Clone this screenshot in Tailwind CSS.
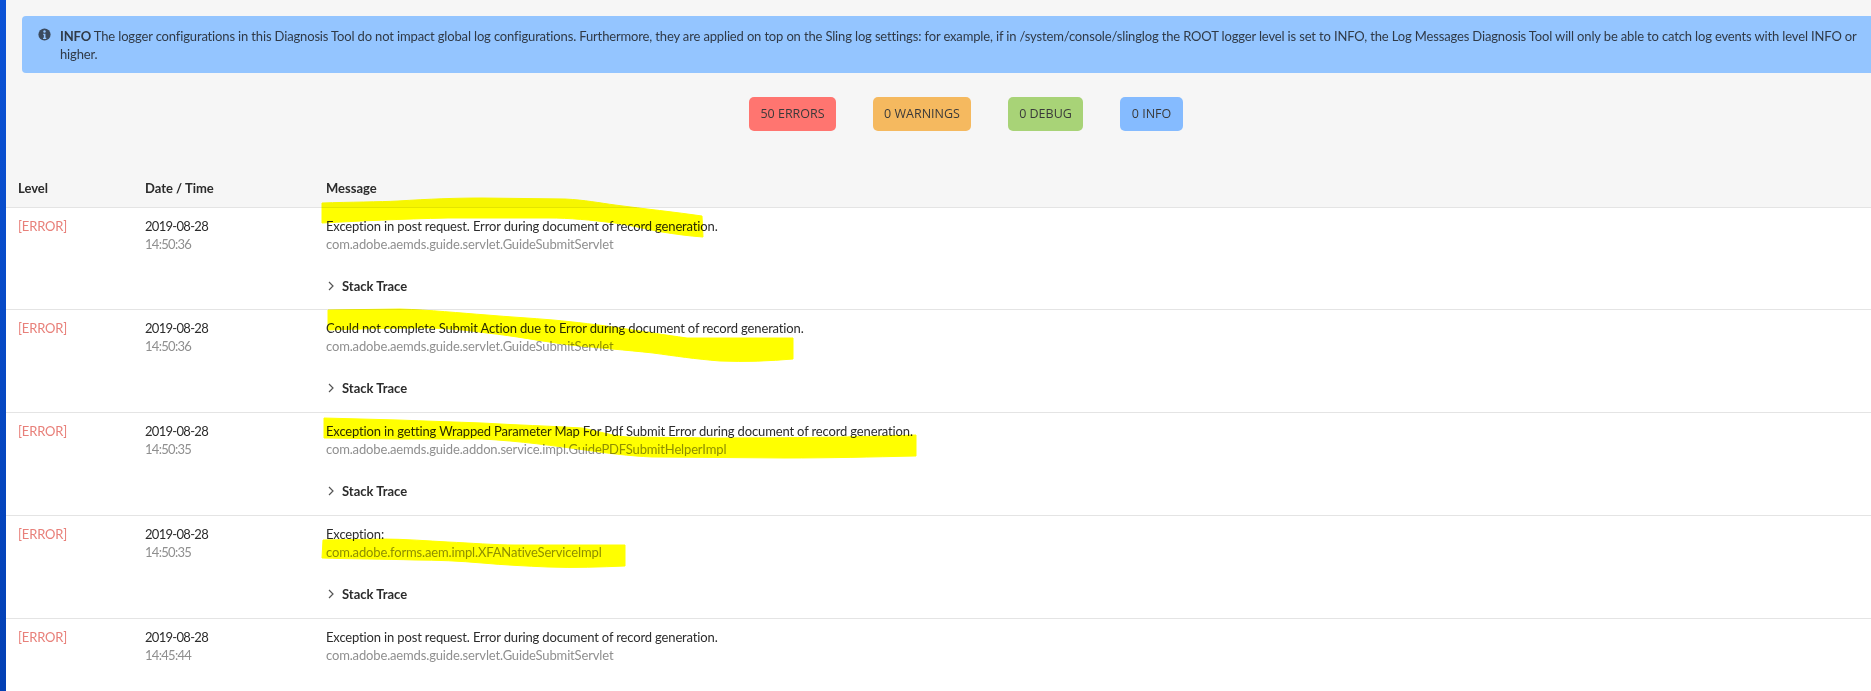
<!DOCTYPE html>
<html lang="en">
<head>
<meta charset="utf-8">
<title>Log Messages</title>
<script src="https://cdn.jsdelivr.net/npm/@tailwindcss/browser@4"></script>
</head>
<body class="m-0 bg-[#f6f6f6]">
<div class="relative flex h-[691px] w-[1871px] overflow-hidden bg-[#f6f6f6] font-['Lato',sans-serif] text-[#2c2c2c]">
  <div class="w-[6px] shrink-0 bg-gradient-to-b from-[#0b52d6] to-[#0340b4]"></div>
  <main class="min-w-0 flex-1">
    <div class="mt-4 ml-4 -mr-4 flex h-[57px] rounded-l bg-[#94c5ff] pt-[11px] pl-[16px] pr-[21px] text-[13px] leading-[18px] tracking-[-0.15px] text-[#303a47]">
      <svg class="mt-[1px] mr-[9px] h-[13px] w-[13px] shrink-0" viewBox="0 0 16 16"><circle cx="8" cy="8" r="7.5" fill="#3b4a5e"/><circle cx="8" cy="4.4" r="1.5" fill="#94c5ff"/><path d="M6.2 7h3v5h1v1.4H6.2V12h1V8.4h-1z" fill="#94c5ff"/></svg>
      <p><b class="font-bold">INFO</b> The logger configurations in this Diagnosis Tool do not impact global log configurations. Furthermore, they are applied on top on the Sling log settings: for example, if in /system/console/slinglog the ROOT logger level is set to INFO, the Log Messages Diagnosis Tool will only be able to catch log events with level INFO or higher.</p>
    </div>

    <div class="mt-6 ml-[743px] flex gap-[37px] font-['Open_Sans',sans-serif] text-[12.5px] text-[#3a3a3a]">
      <span class="flex h-[34px] w-[87px] items-center justify-center rounded-[5px] bg-[#ff7570]">50 ERRORS</span>
      <span class="flex h-[34px] w-[98px] items-center justify-center rounded-[5px] bg-[#f5b95f]">0 WARNINGS</span>
      <span class="flex h-[34px] w-[75px] items-center justify-center rounded-[5px] bg-[#a8d377]">0 DEBUG</span>
      <span class="flex h-[34px] w-[63px] items-center justify-center rounded-[5px] bg-[#85bbff]">0 INFO</span>
    </div>

    <div class="mt-[48px] grid h-[28px] grid-cols-[127px_181px_1fr] px-3 text-[13px] leading-[18px] font-bold text-[#2c2c2c]">
      <span>Level</span><span>Date / Time</span><span>Message</span>
    </div>

    <section class="border-t border-[#e4e4e4] bg-white text-[13px] leading-[18px] tracking-[-0.15px]">
      <article class="grid h-[102px] grid-cols-[127px_181px_1fr] border-b border-[#e4e4e4] px-3 pt-[9px]">
        <div class="text-[#e8807a]">[ERROR]</div>
        <div class="tracking-[-0.7px]"><div>2019-08-28</div><div class="text-[#8f8f8f]">14:50:36</div></div>
        <div><div>Exception in post request. Error during document of record generation.</div><div class="text-[#8f8f8f]">com.adobe.aemds.guide.servlet.GuideSubmitServlet</div>
          <div class="mt-[24px] flex items-center font-bold tracking-normal"><svg class="mr-[7px] ml-[1px] h-[10px] w-[8px]" viewBox="0 0 8 10" fill="none" stroke="#555" stroke-width="1.2"><path d="M2 1l4 4-4 4"/></svg>Stack Trace</div></div>
      </article>
      <article class="grid h-[103px] grid-cols-[127px_181px_1fr] border-b border-[#e4e4e4] px-3 pt-[9px]">
        <div class="text-[#e8807a]">[ERROR]</div>
        <div class="tracking-[-0.7px]"><div>2019-08-28</div><div class="text-[#8f8f8f]">14:50:36</div></div>
        <div><div>Could not complete Submit Action due to Error during document of record generation.</div><div class="text-[#8f8f8f]">com.adobe.aemds.guide.servlet.GuideSubmitServlet</div>
          <div class="mt-[24px] flex items-center font-bold tracking-normal"><svg class="mr-[7px] ml-[1px] h-[10px] w-[8px]" viewBox="0 0 8 10" fill="none" stroke="#555" stroke-width="1.2"><path d="M2 1l4 4-4 4"/></svg>Stack Trace</div></div>
      </article>
      <article class="grid h-[103px] grid-cols-[127px_181px_1fr] border-b border-[#e4e4e4] px-3 pt-[9px]">
        <div class="text-[#e8807a]">[ERROR]</div>
        <div class="tracking-[-0.7px]"><div>2019-08-28</div><div class="text-[#8f8f8f]">14:50:35</div></div>
        <div><div>Exception in getting Wrapped Parameter Map For Pdf Submit Error during document of record generation.</div><div class="text-[#8f8f8f]">com.adobe.aemds.guide.addon.service.impl.GuidePDFSubmitHelperImpl</div>
          <div class="mt-[24px] flex items-center font-bold tracking-normal"><svg class="mr-[7px] ml-[1px] h-[10px] w-[8px]" viewBox="0 0 8 10" fill="none" stroke="#555" stroke-width="1.2"><path d="M2 1l4 4-4 4"/></svg>Stack Trace</div></div>
      </article>
      <article class="grid h-[103px] grid-cols-[127px_181px_1fr] border-b border-[#e4e4e4] px-3 pt-[9px]">
        <div class="text-[#e8807a]">[ERROR]</div>
        <div class="tracking-[-0.7px]"><div>2019-08-28</div><div class="text-[#8f8f8f]">14:50:35</div></div>
        <div><div>Exception:</div><div class="text-[#8f8f8f]">com.adobe.forms.aem.impl.XFANativeServiceImpl</div>
          <div class="mt-[24px] flex items-center font-bold tracking-normal"><svg class="mr-[7px] ml-[1px] h-[10px] w-[8px]" viewBox="0 0 8 10" fill="none" stroke="#555" stroke-width="1.2"><path d="M2 1l4 4-4 4"/></svg>Stack Trace</div></div>
      </article>
      <article class="grid h-[103px] grid-cols-[127px_181px_1fr] px-3 pt-[9px]">
        <div class="text-[#e8807a]">[ERROR]</div>
        <div class="tracking-[-0.7px]"><div>2019-08-28</div><div class="text-[#8f8f8f]">14:45:44</div></div>
        <div><div>Exception in post request. Error during document of record generation.</div><div class="text-[#8f8f8f]">com.adobe.aemds.guide.servlet.GuideSubmitServlet</div></div>
      </article>
    </section>
  </main>

  <svg class="pointer-events-none absolute top-0 left-0 mix-blend-multiply" width="1871" height="691" viewBox="0 0 1871 691" fill="#ffff00" stroke="#ffff00" stroke-width="1" stroke-linejoin="round">
    <path d="M322 203C350 202 380 202 398 201C430 199 455 198 482 198L565 199C585 200 600 203 615 205C645 209 675 212 702 216L703 237C688 236 675 234 662 232C645 229 630 225 615 223C590 220 570 218 548 218L448 218C400 219 360 221 322 223Z"/>
    <path d="M328 310L400 309C430 310 460 313 487 315C510 317 530 318 553 320C575 322 600 325 620 328C640 331 665 335 687 338L793 338L793 359C770 361 745 362 720 361C695 359 675 356 653 353C625 350 600 348 570 345C540 341 515 336 487 333C465 330 445 328 420 328C390 328 360 329 328 330Z"/>
    <path d="M324 418L398 420C425 421 455 422 482 423C515 425 550 426 582 428C598 431 612 436 628 437L718 438C790 438 860 437 916 435L916 456C870 457 830 458 785 458L652 457C630 456 605 453 585 450C555 446 520 441 482 439L398 439L324 438Z"/>
    <path d="M323 540L382 539C405 539 428 541 448 542C470 543 495 545 515 545L625 545L625 566C600 567 575 568 548 567C525 566 505 565 482 563C460 561 437 560 415 560C385 559 350 559 322 558Z"/>
  </svg>
</div>
</body>
</html>
